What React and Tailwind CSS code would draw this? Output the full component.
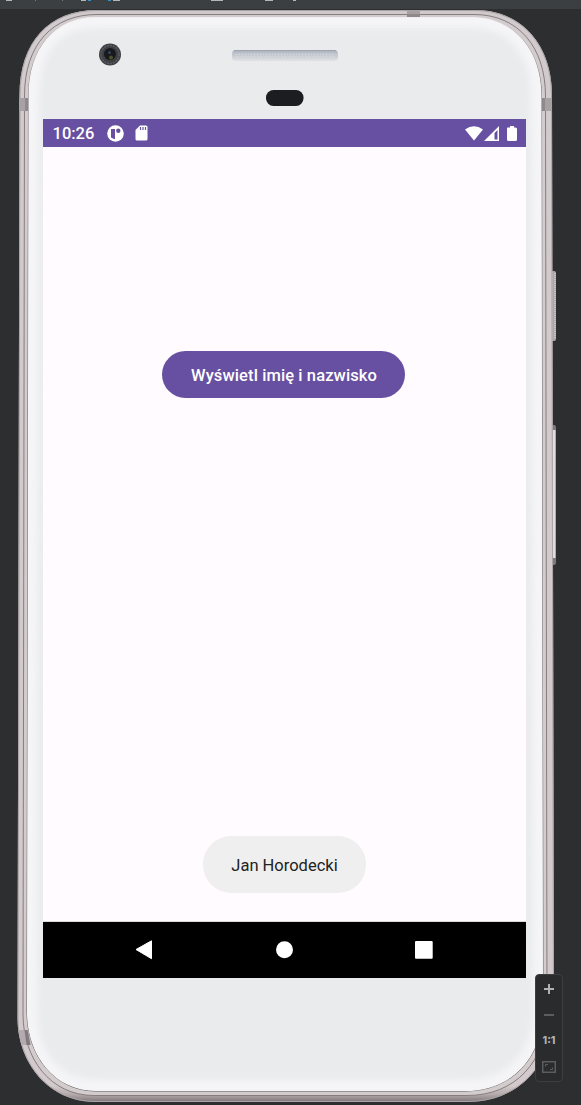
function PhoneBody() {
  return (
    <svg className="absolute inset-0" width="581" height="1105" viewBox="0 0 581 1105" fill="none" aria-hidden="true">
      <defs>
        <linearGradient id="rim" x1="0" y1="10" x2="0" y2="1102" gradientUnits="userSpaceOnUse">
          <stop offset="0" stopColor="#cfc8c9" />
          <stop offset="0.01" stopColor="#d2cbcd" />
          <stop offset="0.985" stopColor="#d2cacc" />
          <stop offset="0.993" stopColor="#b5abad" />
          <stop offset="1" stopColor="#7d7577" />
        </linearGradient>
        <linearGradient id="seam" x1="0" y1="17" x2="0" y2="1091" gradientUnits="userSpaceOnUse">
          <stop offset="0" stopColor="#eceaeb" />
          <stop offset="0.02" stopColor="#aaa4a6" />
          <stop offset="0.08" stopColor="#6d6669" />
          <stop offset="1" stopColor="#5f585b" />
        </linearGradient>
        <linearGradient id="speaker" x1="0" y1="50" x2="0" y2="61" gradientUnits="userSpaceOnUse">
          <stop offset="0" stopColor="#a9adb9" />
          <stop offset="0.3" stopColor="#bfc3cb" />
          <stop offset="0.75" stopColor="#d3d6da" />
          <stop offset="1" stopColor="#e1e2e6" />
        </linearGradient>
        <filter id="soft" x="-10%" y="-10%" width="120%" height="120%">
          <feGaussianBlur stdDeviation="3.500" />
        </filter>
        <clipPath id="face">
          <path d="M95 17.5H472C514 17.5 541.5 50 541.5 96L543 1008C543 1058 512 1091 465 1091H96C54 1091 27 1055 27 1012L28.500 96C28.500 48 55 17.500 95 17.500Z" />
        </clipPath>
      </defs>
      <rect x="551" y="271" width="5" height="70" rx="2" fill="#a9a9a9" />
      <path d="M555 273V339" stroke="#dde0df" strokeDasharray="1 1" />
      <rect x="551" y="425" width="5" height="140" rx="2" fill="#7b7c79" />
      <path d="M554 430V558" stroke="#dedfdd" strokeWidth="3" />
      <path d="M97 10H475C523 10 552 46 552 95L554 1010C554 1065 518 1102 468 1102H95C49 1102 17.500 1063 17.500 1018L19.500 95C19.500 42 49 10 97 10Z" fill="url(#rim)" />
      <path d="M97 10.500H475C522.500 10.500 551.500 46 551.500 95L553.500 1010C553.500 1065 518 1101.500 468 1101.500H95C49 1101.500 18 1063 18 1018L20 95C20 42 49 10.500 97 10.500Z" stroke="#aaa2a4" />
      <path d="M97 14.500H474C519 14.500 545.500 48 545.500 96L547 1010C547 1062 515 1095.500 467 1095.500H94C50 1095.500 23 1058 23 1014L24.500 96C24.500 44 53 14.500 97 14.500Z" fill="#d3cccd" stroke="#867d80" />
      <path d="M95 17.500H472C514 17.500 541.500 50 541.500 96L543 1008C543 1058 512 1091 465 1091H96C54 1091 27 1055 27 1012L28.500 96C28.500 48 55 17.500 95 17.500Z" fill="#eaebed" stroke="url(#seam)" />
      <g clipPath="url(#face)">
        <path filter="url(#soft)" d="M95 19H472C514 19 540 50 540 96L542 1008C542 1058 512 1089 465 1089H96C54 1089 28 1055 28 1012L30 96C30 48 55 19 95 19Z" stroke="#f5f5f7" strokeWidth="18" />
      </g>
      <path d="M407 11H420V17H407ZM19 98H28V111H19ZM542 98H552V111H542Z" fill="#a7a1a3" />
      <path d="M407 14H420V17H407ZM25 98H28V111H25ZM542 98H545V111H542Z" fill="#8f898c" />
      <path d="M18.500 1030L28 1030L30.500 1045H21.500Z" fill="#b3abad" />
      <path d="M24.500 1030H27.500L30.500 1045H26.500Z" fill="#81797d" />
      <circle cx="110" cy="54.500" r="11" fill="#3d3f43" />
      <circle cx="110" cy="54.500" r="9" stroke="#5a5d61" strokeWidth="1.500" strokeDasharray="2 1" />
      <circle cx="110" cy="54" r="6" fill="#17191c" />
      <circle cx="109.500" cy="52.500" r="1.500" fill="#37445e" />
      <circle cx="111" cy="57.500" r="2" fill="#505028" />
      <rect x="232" y="50" width="106" height="11" rx="4" fill="url(#speaker)" />
      <path d="M234 50.500H336" stroke="#a0a4b0" />
      <path d="M236 54.500H335M237 56.500H334" stroke="#d8dbdf" strokeDasharray="1 2" />
      <rect x="266" y="90" width="37.500" height="16" rx="7.500" fill="#1b1d21" />
    </svg>
  );
}

function StatusBar() {
  return (
    <div className="flex h-7 items-center justify-between bg-[#6750a2] text-white">
      <div className="flex items-center pl-[9.500px]">
        <span className="w-[44.500px] pt-px text-[16.500px] leading-7 font-medium">10:26</span>
        <svg className="ml-[10px]" width="17" height="17" viewBox="0 0 17 17" aria-hidden="true">
          <circle cx="8.500" cy="8.500" r="8.300" fill="#fff" />
          <path d="M4 4H8V14H7L4 12.500Z" fill="#6750a2" />
          <circle cx="11.300" cy="5.700" r="2.200" fill="#6750a2" />
        </svg>
        <svg className="ml-[11px]" width="13" height="16" viewBox="0 0 13 16" aria-hidden="true">
          <path d="M5 .5H11Q12.500 .5 12.500 2V14Q12.500 15.500 11 15.500H2Q.5 15.500 .5 14V5Z" fill="#fff" />
          <path d="M5.500 2V5M8 2V5M10.500 2V5" stroke="#6750a2" strokeWidth="1.200" />
        </svg>
      </div>
      <svg className="mr-[7px]" width="54" height="17" viewBox="0 0 54 17" fill="#fff" aria-hidden="true">
        <path d="M0 4.500Q9 -2 18 4.500L9 15.500Z" />
        <path fillRule="evenodd" d="M19 16L34 1V16ZM29.500 8V14.500H32.500V5Z" />
        <path d="M42.500 2.500H45V1H49V2.500H50.500Q52 2.500 52 4V14.500Q52 16 50.500 16H43.500Q42 16 42 14.500V3Z" />
      </svg>
    </div>
  );
}

function NavigationBar() {
  return (
    <div className="h-14 bg-black">
      <svg width="483" height="56" viewBox="0 0 483 56" fill="#fff" aria-hidden="true">
        <path d="M93 27.500L108.500 18.800V36.700Z" stroke="#fff" strokeLinejoin="round" />
        <circle cx="241.500" cy="27.800" r="8.500" />
        <rect x="372" y="19" width="17.700" height="17.700" rx="1" />
      </svg>
    </div>
  );
}

function ZoomControls() {
  return (
    <div className="absolute top-[974px] left-[535px] flex h-[108px] w-7 flex-col items-center rounded-[4px] border border-[#3d3e40] bg-[#2a2b2c] font-['Inter',sans-serif]">
      <svg className="mt-[8px]" width="12" height="12" viewBox="0 0 12 12" stroke="#b0b1b2" strokeWidth="2" aria-hidden="true">
        <path d="M1 6H11M6 1V11" />
      </svg>
      <svg className="mt-[14px]" width="12" height="12" viewBox="0 0 12 12" stroke="#5c5d5e" strokeWidth="2" aria-hidden="true">
        <path d="M1 6H11" />
      </svg>
      <span className="mt-[13px] text-[10.500px] leading-[14px] font-extrabold text-[#b0b1b2]">1:1</span>
      <svg className="mt-[13px]" width="14" height="12" viewBox="0 0 14 12" fill="none" stroke="#5c5d5e" aria-hidden="true">
        <path d="M.75 .75H13.250V11.250H.75Z" strokeWidth="1.500" />
        <path d="M3.500 5.500V3.500H6M8 8.500H10.500V6.500" />
      </svg>
    </div>
  );
}

export default function App() {
  return (
    <div className="relative flex h-[1105px] w-[581px] flex-col overflow-hidden bg-[#2d2e30] font-['Roboto',sans-serif]">
      <div className="h-[9px] bg-[#3c3f41]">
        <svg width="581" height="9" viewBox="0 0 581 9" fill="none" stroke="#b4b7b9" aria-hidden="true">
          <path d="M6 .5H12M81 .5H86M113 .5H120M211 .5H223M265 .5H273M293 .5H296" />
          <path d="M35 .5H36M62 .5H63" stroke="#777b7d" />
          <path d="M88 .5H91M108 .5H111" stroke="#3592c4" />
        </svg>
      </div>
      <PhoneBody />
      <main className="relative mt-[110px] ml-[43px] flex h-[859px] w-[483px] flex-col bg-[#fffbfe]">
        <StatusBar />
        <div className="flex flex-1 flex-col items-center justify-between border-b border-[#dedbdd] pt-[204.400px] pb-7">
          <button className="mr-[2px] h-[47px] w-[243px] rounded-full bg-[#6750a2] pt-[2px] pl-px text-[16.500px] font-medium tracking-[0.1px] text-white">Wyświetl imię i nazwisko</button>
          <div className="flex h-[57px] w-[163px] items-center justify-center rounded-[28px] bg-[#efefef] pt-[3px] text-[16.500px] text-[#222]">Jan Horodecki</div>
        </div>
        <NavigationBar />
      </main>
      <ZoomControls />
    </div>
  );
}
